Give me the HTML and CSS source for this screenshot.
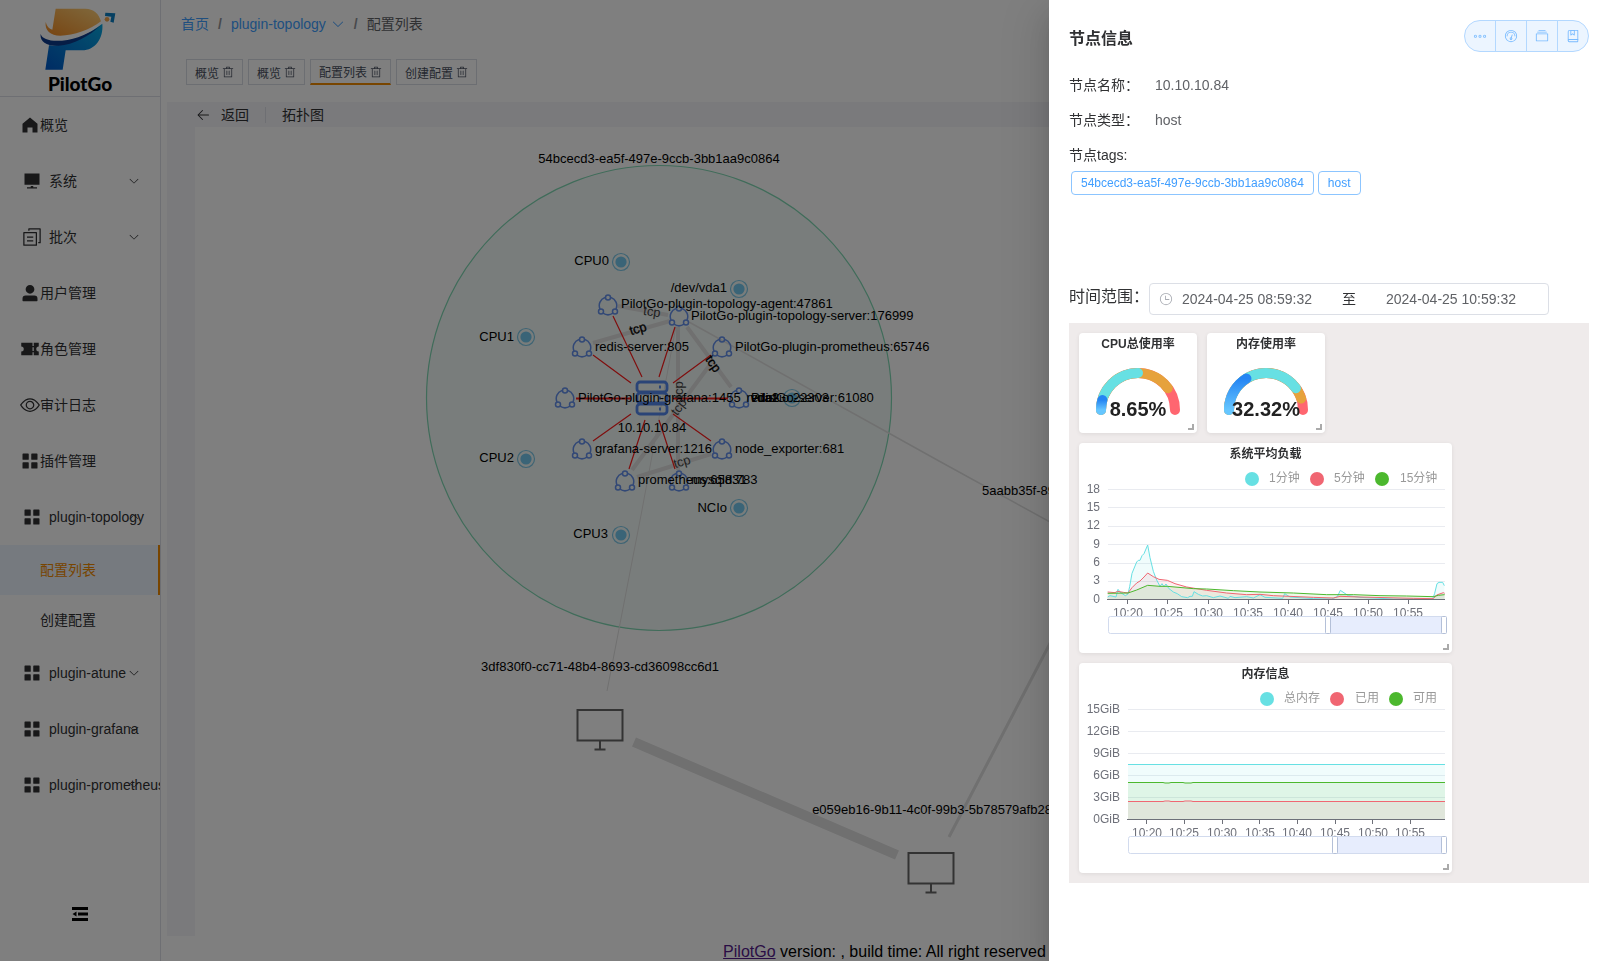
FILE: index.html
```html
<!DOCTYPE html>
<html lang="zh">
<head>
<meta charset="utf-8">
<title>PilotGo</title>
<link rel="stylesheet" href="styles.css">
</head>
<body>
<svg class="defs" aria-hidden="true">
  <symbol id="i-down" viewBox="0 0 1024 1024"><path d="M831.872 340.864 512 652.672 192.128 340.864a30.592 30.592 0 0 0-42.752 0 29.12 29.12 0 0 0 0 41.6L489.664 714.24a32 32 0 0 0 44.672 0l340.288-331.712a29.12 29.12 0 0 0 0-41.728 30.592 30.592 0 0 0-42.752 0z"/></symbol>
  <symbol id="i-home" viewBox="0 0 1024 1024"><path d="M512 128 128 447.936V896h255.936V640H640v256h255.936V447.936z"/></symbol>
  <symbol id="i-platform" viewBox="0 0 1024 1024"><path d="M448 832v-64h128v64h192v64H256v-64zM128 704V128h768v576z"/></symbol>
  <symbol id="i-copy" viewBox="0 0 1024 1024"><path d="M128 320v576h576V320zm-32-64h640a32 32 0 0 1 32 32v640a32 32 0 0 1-32 32H96a32 32 0 0 1-32-32V288a32 32 0 0 1 32-32M960 96v704a32 32 0 0 1-32 32h-96v-64h64V128H384v64h-64V96a32 32 0 0 1 32-32h576a32 32 0 0 1 32 32M256 672h320v64H256zm0-192h320v64H256z"/></symbol>
  <symbol id="i-user" viewBox="0 0 1024 1024"><path d="M288 320a224 224 0 1 0 448 0 224 224 0 1 0-448 0m544 608H160a32 32 0 0 1-32-32v-96a160 160 0 0 1 160-160h448a160 160 0 0 1 160 160v96a32 32 0 0 1-32 32z"/></symbol>
  <symbol id="i-ticket" viewBox="0 0 1024 1024"><path d="M640 832H64V640a128 128 0 1 0 0-256V192h576v160h64V192h256v192a128 128 0 1 0 0 256v192H704V672h-64zm0-416v192h64V416z"/></symbol>
  <symbol id="i-view" viewBox="0 0 1024 1024"><path d="M512 160c320 0 512 352 512 352S832 864 512 864 0 512 0 512s192-352 512-352m0 64c-225.28 0-384.128 208.064-436.8 288 52.608 79.872 211.456 288 436.8 288 225.28 0 384.128-208.064 436.8-288-52.608-79.872-211.456-288-436.8-288m0 64a224 224 0 1 1 0 448 224 224 0 0 1 0-448m0 64a160.192 160.192 0 0 0-160 160c0 88.192 71.744 160 160 160s160-71.808 160-160-71.744-160-160-160"/></symbol>
  <symbol id="i-menu" viewBox="0 0 1024 1024"><path d="M160 448a32 32 0 0 1-32-32V160.064a32 32 0 0 1 32-32h256a32 32 0 0 1 32 32V416a32 32 0 0 1-32 32zm448 0a32 32 0 0 1-32-32V160.064a32 32 0 0 1 32-32h255.936a32 32 0 0 1 32 32V416a32 32 0 0 1-32 32zM160 896a32 32 0 0 1-32-32V608a32 32 0 0 1 32-32h256a32 32 0 0 1 32 32v256a32 32 0 0 1-32 32zm448 0a32 32 0 0 1-32-32V608a32 32 0 0 1 32-32h255.936a32 32 0 0 1 32 32v256a32 32 0 0 1-32 32z"/></symbol>
  <symbol id="i-trash" viewBox="0 0 1024 1024"><path d="M160 256H96a32 32 0 0 1 0-64h256V95.936a32 32 0 0 1 32-32h256a32 32 0 0 1 32 32V192h256a32 32 0 1 1 0 64h-64v672a32 32 0 0 1-32 32H192a32 32 0 0 1-32-32zm448-64v-64H416v64zM224 896h576V256H224zm192-128a32 32 0 0 1-32-32V416a32 32 0 0 1 64 0v320a32 32 0 0 1-32 32m192 0a32 32 0 0 1-32-32V416a32 32 0 0 1 64 0v320a32 32 0 0 1-32 32"/></symbol>
  <symbol id="i-back" viewBox="0 0 1024 1024"><path d="M224 480h640a32 32 0 1 1 0 64H224a32 32 0 0 1 0-64"/><path d="m237.248 512 265.408 265.344a32 32 0 0 1-45.312 45.312l-288-288a32 32 0 0 1 0-45.312l288-288a32 32 0 1 1 45.312 45.312z"/></symbol>
  <symbol id="i-more" viewBox="0 0 1024 1024"><path d="M176 416a112 112 0 1 0 0 224 112 112 0 0 0 0-224m0 64a48 48 0 1 1 0 96 48 48 0 0 1 0-96m336-64a112 112 0 1 1 0 224 112 112 0 0 1 0-224m0 64a48 48 0 1 0 0 96 48 48 0 0 0 0-96m336-64a112 112 0 1 1 0 224 112 112 0 0 1 0-224m0 64a48 48 0 1 0 0 96 48 48 0 0 0 0-96"/></symbol>
  <symbol id="i-meter" viewBox="0 0 1024 1024"><path d="M512 896a384 384 0 1 0 0-768 384 384 0 0 0 0 768m0 64a448 448 0 1 1 0-896 448 448 0 0 1 0 896"/><path d="M192 512a320 320 0 1 1 640 0 32 32 0 1 1-64 0 256 256 0 1 0-512 0 32 32 0 0 1-64 0"/><path d="M570.432 627.84A96 96 0 1 1 509.568 608l60.992-187.776A32 32 0 1 1 631.424 440zM502.08 734.464a32 32 0 1 0 19.84-60.928 32 32 0 0 0-19.84 60.928"/></symbol>
  <symbol id="i-files" viewBox="0 0 1024 1024"><path d="M128 384v448h768V384zm-32-64h832a32 32 0 0 1 32 32v512a32 32 0 0 1-32 32H96a32 32 0 0 1-32-32V352a32 32 0 0 1 32-32m64-128h704v64H160zm96-128h512v64H256z"/></symbol>
  <symbol id="i-collection" viewBox="0 0 1024 1024"><path d="M192 736h640V128H256a64 64 0 0 0-64 64zm64-672h608a32 32 0 0 1 32 32v672a32 32 0 0 1-32 32H160l-32 57.536V192A128 128 0 0 1 256 64"/><path d="M240 800a48 48 0 1 0 0 96h592v-96zm0-64h656v160a64 64 0 0 1-64 64H240a112 112 0 0 1 0-224m144-608v250.88l96-76.8 96 76.8V128zm-64-64h320v381.44a32 32 0 0 1-51.968 24.96L480 384l-108.032 86.4A32 32 0 0 1 320 445.44z"/></symbol>
  <symbol id="i-clock" viewBox="0 0 1024 1024"><path d="M512 896a384 384 0 1 0 0-768 384 384 0 0 0 0 768m0 64a448 448 0 1 1 0-896 448 448 0 0 1 0 896"/><path d="M480 256a32 32 0 0 1 32 32v256a32 32 0 0 1-64 0V288a32 32 0 0 1 32-32"/><path d="M480 512h256q32 0 32 32t-32 32H480q-32 0-32-32t32-32"/></symbol>
  <symbol id="n-proc" viewBox="-12 -12 24 24"><path d="M-3 -7.5A8.5 8.5 0 0 0 -8 4M3 -7.5A8.5 8.5 0 0 1 8 4M-5 8.2A9 9 0 0 0 5 8.2"/><circle cx="0" cy="-7.4" r="2.5"/><circle cx="-7" cy="6.4" r="2.5"/><circle cx="7" cy="6.4" r="2.5"/></symbol>
  <symbol id="n-res" viewBox="-12 -12 24 24"><circle class="ring" r="8.5"/><circle class="dot" r="5.6"/></symbol>
  <symbol id="n-pc" viewBox="-25 -25 50 50"><path d="M-22.500 -20h45v30.500h-45zM0 10.500v9M-5.500 19.500h11"/></symbol>
</svg>

<div class="app">
  <aside class="side">
    <div class="logo">
      <svg class="mark" width="80" height="72" viewBox="29 10 240 216">
        <defs>
          <linearGradient id="lo" x1="1" y1="0" x2="0" y2="1"><stop offset="0" stop-color="#ffd27a"/><stop offset="1" stop-color="#f08a24"/></linearGradient>
          <linearGradient id="lb" x1="1" y1="0" x2="0" y2="1"><stop offset="0" stop-color="#08a8e0"/><stop offset="1" stop-color="#0058c8"/></linearGradient>
        </defs>
        <path fill="url(#lo)" d="M76 27H165C190 27 206 42 212 65C180 90 130 108 90 108C60 108 43 92 46 67C50 80 56 88 66 90Z"/>
        <path fill="url(#lb)" d="M216 72C220 115 195 152 155 152H106L97 210H45L56 137C110 142 165 108 216 72Z"/>
        <path fill="#0d3b8c" d="M31 103C35 118 60 126 95 123C140 119 180 100 213 76C175 110 130 136 85 138C45 140 28 122 31 103Z"/>
        <circle cx="230" cy="59" r="7" fill="#f5a54a"/>
        <path fill="#0b7fc2" d="M225 39L255 41L250 69L240 66L243 51L224 49Z"/>
      </svg>
      <span class="word">PilotGo</span>
    </div>
    <nav class="menu">
      <a href="#" class="item"><svg class="ic"><use href="#i-home"/></svg>概览</a>
      <a href="#" class="item sub"><svg class="ic"><use href="#i-platform"/></svg>系统<svg class="arr"><use href="#i-down"/></svg></a>
      <a href="#" class="item sub"><svg class="ic"><use href="#i-copy"/></svg>批次<svg class="arr"><use href="#i-down"/></svg></a>
      <a href="#" class="item"><svg class="ic"><use href="#i-user"/></svg>用户管理</a>
      <a href="#" class="item"><svg class="ic"><use href="#i-ticket"/></svg>角色管理</a>
      <a href="#" class="item"><svg class="ic"><use href="#i-view"/></svg>审计日志</a>
      <a href="#" class="item"><svg class="ic"><use href="#i-menu"/></svg>插件管理</a>
      <a href="#" class="item sub"><svg class="ic"><use href="#i-menu"/></svg>plugin-topology<svg class="arr up"><use href="#i-down"/></svg></a>
      <a href="#" class="leaf active">配置列表</a>
      <a href="#" class="leaf">创建配置</a>
      <a href="#" class="item sub"><svg class="ic"><use href="#i-menu"/></svg>plugin-atune<svg class="arr"><use href="#i-down"/></svg></a>
      <a href="#" class="item sub"><svg class="ic"><use href="#i-menu"/></svg>plugin-grafana<svg class="arr"><use href="#i-down"/></svg></a>
      <a href="#" class="item sub"><svg class="ic"><use href="#i-menu"/></svg>plugin-prometheus<svg class="arr"><use href="#i-down"/></svg></a>
    </nav>
    <button class="fold" aria-label="折叠菜单"><svg width="16" height="14" viewBox="0 0 16 14"><path d="M0 0h16v3H0zM6 5.500h10v3H6zM0 11h16v3H0zM4.500 4.500v5L0.500 7z"/></svg></button>
  </aside>

  <main class="main">
    <div class="crumbs"><a href="#">首页</a><b>/</b><a href="#">plugin-topology</a><svg class="arr"><use href="#i-down"/></svg><b>/</b><span>配置列表</span></div>
    <div class="tabs">
      <button class="tab">概览<svg><use href="#i-trash"/></svg></button>
      <button class="tab">概览<svg><use href="#i-trash"/></svg></button>
      <button class="tab on">配置列表<svg><use href="#i-trash"/></svg></button>
      <button class="tab">创建配置<svg><use href="#i-trash"/></svg></button>
    </div>
    <section class="content">
      <div class="pagehead"><button class="back"><svg><use href="#i-back"/></svg>返回</button><i></i><span>拓扑图</span></div>
      <div class="canvas">
        <svg class="graph">
          <g transform="translate(-195 -127)">
            <circle class="hull" cx="659" cy="398" r="232.500"/>
            <g class="edge">
              <path d="M618 306L668 315M593 343L670 321M678 327V470M687 327L731 387M712 362L632 470M637 477L711 454" stroke-width="4"/>
              <path d="M689 322L939 461L1070 533" stroke-width="1.500"/>
              <path d="M676 326L642 510L607 691" stroke-width="1"/>
              <path d="M634 742L897 855" stroke-width="10"/>
              <path d="M949 837L1070 605" stroke-width="3"/>
            </g>
            <path class="own" d="M613 316L642 377M675 327L659 377M593 355L631 383M711 355L673 383M593 441L631 414M629 469L645 420M675 469L659 420M673 414L711 441"/>
            <path class="own bold" d="M576 398.500H631M673 398.500H728"/>
            <g class="host"><rect x="637" y="382" width="30" height="10" rx="3"/><rect x="637" y="393" width="30" height="10" rx="3"/><rect x="637" y="404" width="30" height="10" rx="3"/><path d="M659 387h2M659 398h2M659 409h2"/></g>
            <g class="proc">
              <use href="#n-proc" x="596" y="293" width="24" height="24"/>
              <use href="#n-proc" x="667" y="304" width="24" height="24"/>
              <use href="#n-proc" x="570" y="335" width="24" height="24"/>
              <use href="#n-proc" x="710" y="335" width="24" height="24"/>
              <use href="#n-proc" x="553" y="386" width="24" height="24"/>
              <use href="#n-proc" x="727" y="386" width="24" height="24"/>
              <use href="#n-proc" x="570" y="437" width="24" height="24"/>
              <use href="#n-proc" x="710" y="437" width="24" height="24"/>
              <use href="#n-proc" x="613" y="469" width="24" height="24"/>
              <use href="#n-proc" x="667" y="469" width="24" height="24"/>
            </g>
            <g class="res">
              <use href="#n-res" x="609" y="250" width="24" height="24"/>
              <use href="#n-res" x="727" y="277" width="24" height="24"/>
              <use href="#n-res" x="514" y="325" width="24" height="24"/>
              <use href="#n-res" x="514" y="447" width="24" height="24"/>
              <use href="#n-res" x="609" y="523" width="24" height="24"/>
              <use href="#n-res" x="727" y="496" width="24" height="24"/>
              <use href="#n-res" x="780" y="386" width="24" height="24"/>
            </g>
            <g class="pc"><use href="#n-pc" x="575" y="705" width="50" height="50"/><use href="#n-pc" x="906" y="848" width="50" height="50"/></g>
            <g class="lbl">
              <text x="621" y="308">PilotGo-plugin-topology-agent:47861</text>
              <text x="691" y="320">PilotGo-plugin-topology-server:176999</text>
              <text x="595" y="351">redis-server:805</text>
              <text x="735" y="351">PilotGo-plugin-prometheus:65746</text>
              <text x="578" y="402">PilotGo-plugin-grafana:1455</text>
              <text x="751" y="402">PilotGo-server:61080</text>
              <text x="595" y="453">grafana-server:1216</text>
              <text x="735" y="453">node_exporter:681</text>
              <text x="638" y="484">prometheus:65831</text>
              <text x="691" y="484">mysqld:783</text>
              <text x="779" y="402" text-anchor="end">vda2</text>
              <text x="779" y="402" text-anchor="end">vda1</text>
              <text x="829" y="402" text-anchor="end">redis-io:22303</text>
              <text x="652" y="432" text-anchor="middle">10.10.10.84</text>
              <text x="609" y="265" text-anchor="end">CPU0</text>
              <text x="727" y="292" text-anchor="end">/dev/vda1</text>
              <text x="514" y="341" text-anchor="end">CPU1</text>
              <text x="514" y="462" text-anchor="end">CPU2</text>
              <text x="608" y="538" text-anchor="end">CPU3</text>
              <text x="727" y="512" text-anchor="end">NCIo</text>
              <text x="659" y="163" text-anchor="middle">54bcecd3-ea5f-497e-9ccb-3bb1aa9c0864</text>
              <text x="600" y="671" text-anchor="middle">3df830f0-cc71-48b4-8693-cd36098cc6d1</text>
              <text x="932" y="814" text-anchor="middle">e059eb16-9b11-4c0f-99b3-5b78579afb28</text>
              <text x="982" y="495">5aabb35f-89a3-4d21</text>
              <g text-anchor="middle">
                <text class="soft" transform="translate(652 312) rotate(8)" y="4">tcp</text>
                <text class="strong" transform="translate(638 329) rotate(-17)" y="4">tcp</text>
                <text class="strong" transform="translate(713 364) rotate(54)" y="4">tcp</text>
                <text class="soft" transform="translate(679 390) rotate(-90)" y="4">tcp</text>
                <text class="soft" transform="translate(679 407) rotate(-53)" y="4">tcp</text>
                <text class="soft" transform="translate(682 462) rotate(-17)" y="4">tcp</text>
              </g>
            </g>
          </g>
        </svg>
      </div>
    </section>
    <footer class="foot"><a href="#">PilotGo</a> version: , build time: All right reserved</footer>
  </main>
</div>

<div class="mask"></div>

<section class="drawer" role="dialog" aria-labelledby="dt">
  <header class="dhead">
    <h1 id="dt">节点信息</h1>
    <div class="group">
      <button aria-label="更多"><svg><use href="#i-more"/></svg></button>
      <button aria-label="指标"><svg><use href="#i-meter"/></svg></button>
      <button aria-label="文件"><svg><use href="#i-files"/></svg></button>
      <button aria-label="收藏"><svg><use href="#i-collection"/></svg></button>
    </div>
  </header>
  <dl class="info">
    <div><dt>节点名称：</dt><dd>10.10.10.84</dd></div>
    <div><dt>节点类型：</dt><dd>host</dd></div>
    <div><dt>节点tags:</dt></div>
  </dl>
  <div class="tags"><span>54bcecd3-ea5f-497e-9ccb-3bb1aa9c0864</span><span>host</span></div>

  <div class="range">
    <label for="from">时间范围：</label>
    <div class="picker"><svg><use href="#i-clock"/></svg><input id="from" value="2024-04-25 08:59:32"><span>至</span><input aria-label="结束时间" value="2024-04-25 10:59:32"></div>
  </div>

  <div class="board">
    <article class="card small">
      <h2>CPU总使用率</h2>
      <svg width="118" height="100" viewBox="0 0 118 100" class="gauge">
        <defs><linearGradient id="gb" x1="0" y1="0" x2="0" y2="1"><stop offset="0" stop-color="#2585f3"/><stop offset="1" stop-color="#66c6ff"/></linearGradient></defs>
        <path d="M22 77A37 37 0 0 1 96 77" stroke="#ff6670"/>
        <path d="M22 77A37 37 0 0 1 88.930 55.250" stroke="#e6a23c"/>
        <path d="M22 77A37 37 0 0 1 59 40" stroke="#67e0e3"/>
        <path d="M22 77A37 37 0 0 1 23.350 67.060" stroke="url(#gb)"/>
        <text x="59" y="83">8.65%</text>
      </svg><i class="grip"></i>
    </article>
    <article class="card small">
      <h2>内存使用率</h2>
      <svg width="118" height="100" viewBox="0 0 118 100" class="gauge">
        <path d="M22 77A37 37 0 0 1 96 77" stroke="#ff6670"/>
        <path d="M22 77A37 37 0 0 1 94.190 65.570" stroke="#e6a23c"/>
        <path d="M22 77A37 37 0 0 1 88.930 55.250" stroke="#67e0e3"/>
        <path d="M22 77A37 37 0 0 1 39.480 45.550" stroke="url(#gb)"/>
        <text x="59" y="83">32.32%</text>
      </svg><i class="grip"></i>
    </article>
    <article class="card wide">
      <h2>系统平均负载</h2>
      <svg width="373" height="210" viewBox="0 0 373 210" class="chart">
        <g class="legend"><circle cx="173" cy="36" r="7" fill="#67e0e3"/><circle cx="238" cy="36" r="7" fill="#f06672"/><circle cx="303" cy="36" r="7" fill="#4cb82e"/><text x="190" y="39">1分钟</text><text x="255" y="39">5分钟</text><text x="321" y="39">15分钟</text></g>
        <path class="grid" d="M29 46.500H366M29 64.500H366M29 83.500H366M29 101.500H366M29 120.500H366M29 138.500H366"/>
        <g class="ax" text-anchor="end"><text x="21" y="50">18</text><text x="21" y="68">15</text><text x="21" y="86">12</text><text x="21" y="105">9</text><text x="21" y="123">6</text><text x="21" y="141">3</text><text x="21" y="160">0</text></g>
        <svg x="0" y="0" width="373" height="210" viewBox="57 39 1119 630" class="series">
          <path class="a" fill="#67e0e3" d="M143 508L143 501 150 497 168 501 174 478 182 488 196 497 204 492 209 470 216 430 230 396 235 391 240 391 246 377 252 371 263 345 270 383 280 424 290 450 300 469 306 461 312 470 318 462 326 475 340 486 352 491 365 500 383 503 390 499 397 499 402 485 415 493 428 498 440 497 460 503 480 498 505 505 510 499 525 503 560 500 580 504 600 494 615 502 668 505 674 491 690 501 760 506 815 507 832 500 841 481 865 497 900 502 1000 507 1118 507 1124 490 1131 461 1137 457 1148 457 1153 467V508Z"/>
          <path class="a" fill="#f06672" d="M143 508L143 486 165 488 172 484 190 487 204 489 216 473 230 459 240 453 252 441 263 429 280 440 297 448 322 451 345 461 380 471 440 481 500 489 560 494 600 493 640 497 760 502 820 504 840 499 900 501 1060 505 1120 506 1130 495 1150 488 1154 490V508Z"/>
          <path class="a" fill="#4cb82e" d="M143 508L143 490 204 489 230 480 263 466 300 469 322 469 400 476 440 477 520 482 600 486 700 489 800 494 880 494 960 497 1040 498 1120 500 1135 496 1154 494V508Z"/>
          <path stroke="#67e0e3" d="M143 501L150 497 168 501 174 478 182 488 196 497 204 492 209 470 216 430 230 396 235 391 240 391 246 377 252 371 263 345 270 383 280 424 290 450 300 469 306 461 312 470 318 462 326 475 340 486 352 491 365 500 383 503 390 499 397 499 402 485 415 493 428 498 440 497 460 503 480 498 505 505 510 499 525 503 560 500 580 504 600 494 615 502 668 505 674 491 690 501 760 506 815 507 832 500 841 481 865 497 900 502 1000 507 1118 507 1124 490 1131 461 1137 457 1148 457 1153 467"/>
          <path stroke="#f06672" d="M143 486L165 488 172 484 190 487 204 489 216 473 230 459 240 453 252 441 263 429 280 440 297 448 322 451 345 461 380 471 440 481 500 489 560 494 600 493 640 497 760 502 820 504 840 499 900 501 1060 505 1120 506 1130 495 1150 488 1154 490"/>
          <path stroke="#4cb82e" d="M143 490L204 489 230 480 263 466 300 469 322 469 400 476 440 477 520 482 600 486 700 489 800 494 880 494 960 497 1040 498 1120 500 1135 496 1154 494"/>
        </svg>
        <path class="axis" d="M28 156.500H366M48.500 156v5M88.500 156v5M129.500 156v5M169.500 156v5M209.500 156v5M249.500 156v5M289.500 156v5M329.500 156v5"/>
        <g class="ax" text-anchor="middle"><text x="49" y="174">10:20</text><text x="89" y="174">10:25</text><text x="129" y="174">10:30</text><text x="169" y="174">10:35</text><text x="209" y="174">10:40</text><text x="249" y="174">10:45</text><text x="289" y="174">10:50</text><text x="329" y="174">10:55</text></g>
        <rect class="track" x="29.500" y="173.500" width="337" height="17" rx="2"/><rect class="sel" x="250" y="174" width="115" height="16"/>
        <rect class="knob" x="246.500" y="173.500" width="5" height="17" rx="1"/><rect class="knob" x="362.500" y="173.500" width="5" height="17" rx="1"/>
      </svg><i class="grip"></i>
    </article>
    <article class="card wide">
      <h2>内存信息</h2>
      <svg width="373" height="210" viewBox="0 0 373 210" class="chart">
        <g class="legend"><circle cx="188" cy="36" r="7" fill="#67e0e3"/><circle cx="258" cy="36" r="7" fill="#f06672"/><circle cx="317" cy="36" r="7" fill="#4cb82e"/><text x="205" y="39">总内存</text><text x="276" y="39">已用</text><text x="334" y="39">可用</text></g>
        <path class="grid" d="M49 46.500H366M49 68.500H366M49 90.500H366M49 112.500H366M49 134.500H366"/>
        <g class="ax" text-anchor="end"><text x="41" y="50">15GiB</text><text x="41" y="72">12GiB</text><text x="41" y="94">9GiB</text><text x="41" y="116">6GiB</text><text x="41" y="138">3GiB</text><text x="41" y="160">0GiB</text></g>
        <g class="series">
          <path class="a" fill="#67e0e3" d="M49 101.500H366V156H49Z"/><path class="a" fill="#4cb82e" d="M49 119.500H366V156H49Z"/><path class="a" fill="#f06672" d="M49 138.500H366V156H49Z"/>
          <path stroke="#67e0e3" d="M49 101.500H366"/><path stroke="#f06672" d="M49 138.500H84L86 138H90L92 138.500H104L106 138H112L114 138.500H366"/><path stroke="#4cb82e" d="M49 119.500H84L86 120H90L92 119.500H104L106 120H112L114 119.500H366"/>
        </g>
        <path class="axis" d="M48 156.500H366M67.500 156v5M105.500 156v5M143.500 156v5M180.500 156v5M218.500 156v5M256.500 156v5M293.500 156v5M331.500 156v5"/>
        <g class="ax" text-anchor="middle"><text x="68" y="174">10:20</text><text x="105" y="174">10:25</text><text x="143" y="174">10:30</text><text x="181" y="174">10:35</text><text x="218" y="174">10:40</text><text x="256" y="174">10:45</text><text x="294" y="174">10:50</text><text x="331" y="174">10:55</text></g>
        <rect class="track" x="49.500" y="173.500" width="317" height="17" rx="2"/><rect class="sel" x="257" y="174" width="108" height="16"/>
        <rect class="knob" x="253.500" y="173.500" width="5" height="17" rx="1"/><rect class="knob" x="362.500" y="173.500" width="5" height="17" rx="1"/>
      </svg><i class="grip"></i>
    </article>
  </div>
</section>
</body>
</html>
```

FILE: styles.css
```css
* { box-sizing: border-box; }
body { margin: 0; font-family: "Liberation Sans", "Noto Sans CJK SC", sans-serif; font-size: 14px; color: #303133; background: #fff; }
button { font: inherit; color: inherit; background: none; border: 0; padding: 0; }
a { color: inherit; text-decoration: none; }
svg { fill: currentColor; flex: none; }
.defs { position: absolute; width: 0; height: 0; }

.app { display: flex; height: 100vh; overflow: hidden; }

.side { flex: none; width: 161px; display: flex; flex-direction: column; border-right: 1px solid #dcdfe6; overflow: hidden; }
.logo { height: 97px; border-bottom: 1px solid #dcdfe6; display: flex; flex-direction: column; align-items: center; padding-top: 3px; }
.mark { display: block; }
.word { font-family: Lato, sans-serif; font-weight: 900; font-size: 19px; line-height: 18px; color: #000; }
.menu { display: flex; flex-direction: column; }
.item { height: 56px; line-height: 56px; display: flex; align-items: center; padding-left: 20px; white-space: nowrap; position: relative; }
.item .ic { width: 20px; height: 20px; }
.item.sub .ic { margin: 0 7px 0 2px; }
.arr { width: 12px; height: 12px; }
.item .arr { position: absolute; right: 20px; top: 22px; }
.item .arr.up { transform: rotate(180deg); }
.leaf { height: 50px; line-height: 50px; padding-left: 40px; }
.leaf.active { background: #ecf5ff; color: #f08a00; border-right: 2px solid #f08a00; }
.fold { margin: auto 0 40px; align-self: center; display: flex; color: #000; }

.main { flex: 1; min-width: 0; display: flex; flex-direction: column; }
.crumbs { height: 48px; line-height: 48px; padding-left: 20px; display: flex; align-items: center; color: #606266; }
.crumbs a { color: #409eff; }
.crumbs b { margin: 0 9px; color: #909399; }
.crumbs .arr { width: 14px; height: 14px; margin-left: 5px; color: #409eff; }
.tabs { display: flex; gap: 5px; padding: 11px 0 0 25px; }
.tab { height: 26px; padding: 0 8px; border: 1px solid #d8dce5; font-size: 12px; color: #495060; display: flex; align-items: center; gap: 3px; }
.tab svg { width: 12px; height: 12px; }
.tab.on { border-bottom: 2px solid #f08a00; }
.content { flex: 1; min-height: 0; margin: 17px 6px 0; padding: 0 28px; background: #f4f4f9; display: flex; flex-direction: column; }
.pagehead { height: 25px; line-height: 24px; display: flex; align-items: center; }
.back { display: flex; align-items: center; gap: 10px; line-height: 24px; }
.back svg { width: 16px; height: 16px; }
.pagehead i { width: 1px; height: 16px; background: #dcdfe6; margin: 0 16px; }
.canvas { flex: 1; min-height: 0; background: #fff; overflow: hidden; }
.graph { display: block; width: 100%; height: 100%; }
.foot { height: 25px; line-height: 32px; font-size: 16px; text-align: center; color: #000; }
.foot a { color: #551a8b; text-decoration: underline; }

.hull { fill: #f3fbf8; stroke: #80d8b4; stroke-width: 1.200; }
.edge { fill: none; stroke: #e0e0e0; }
.own { fill: none; stroke: #ff1c1c; stroke-width: 1.200; }
.own.bold { stroke-width: 2; }
.host { fill: none; stroke: #5488ee; stroke-width: 2.800; }
.proc { fill: none; stroke: #6490ec; stroke-width: 1.500; }
.ring { fill: none; stroke: #7cc8e8; stroke-width: 1.200; }
.dot { fill: #74c8ee; }
.pc { fill: none; stroke: #666; stroke-width: 2; }
.lbl { font-size: 13px; fill: #000; }
.soft { fill: #444; }
.strong { stroke: #000; stroke-width: 0.300; }

.mask { position: fixed; inset: 0; background: rgba(0, 0, 0, 0.5); }

.drawer { position: fixed; top: 0; right: 0; bottom: 0; width: 559px; background: #fff; padding: 20px 19px 20px 20px; box-shadow: 0 16px 48px 16px rgba(0, 0, 0, 0.08), 0 12px 32px rgba(0, 0, 0, 0.12), 0 8px 16px -8px rgba(0, 0, 0, 0.16); overflow: hidden; }
.dhead { display: flex; justify-content: space-between; align-items: center; height: 32px; }
.dhead h1 { margin: 6px 0 0; font-size: 16px; line-height: 24px; }
.group { display: flex; }
.group button { width: 32px; height: 32px; border: 1px solid #b3d8ff; background: #ecf5ff; color: #79bbff; display: flex; align-items: center; justify-content: center; }
.group button + button { margin-left: -1px; }
.group button:first-child { border-radius: 16px 0 0 16px; }
.group button:last-child { border-radius: 0 16px 16px 0; }
.group svg { width: 14px; height: 14px; }
.info { margin: 16px 0 0; }
.info div { height: 35px; line-height: 35px; display: flex; gap: 16px; }
.info dd { margin: 0; color: #606266; }
.tags { display: flex; gap: 4px; padding-left: 2px; margin-top: -2px; }
.tags span { height: 24px; line-height: 22px; font-size: 12px; padding: 0 9px; border: 1px solid #8cc5ff; border-radius: 4px; color: #409eff; }
.range { display: flex; align-items: flex-start; margin-top: 88px; }
.range label { width: 80px; font-size: 16px; line-height: 28px; white-space: nowrap; }
.picker { width: 400px; height: 32px; border: 1px solid #dcdfe6; border-radius: 4px; display: flex; align-items: center; padding: 0 9px; }
.picker svg { width: 14px; height: 14px; color: #a8abb2; }
.picker input { width: 148px; border: 0; padding: 0; font: inherit; color: #606266; text-align: center; background: none; outline: 0; }
.picker span { width: 56px; line-height: 30px; text-align: center; }

.board { margin-top: 8px; background: #efebeb; padding: 10px; display: grid; grid-template-columns: 118px 118px 117px; gap: 10px; }
.card { position: relative; background: #fff; border-radius: 4px; box-shadow: 0 1px 4px rgba(0, 0, 0, 0.08); }
.card.wide { grid-column: 1 / 4; height: 210px; }
.card.small { height: 100px; }
.card h2 { margin: 0; font-size: 12px; line-height: 22px; text-align: center; height: 0; }
.card svg { display: block; }
.grip { position: absolute; right: 3px; bottom: 3px; width: 6px; height: 6px; border-right: 2px solid #aaa; border-bottom: 2px solid #aaa; }
.gauge path { fill: none; stroke-width: 10; stroke-linecap: round; }
.gauge text { font-size: 20px; font-weight: 700; text-anchor: middle; fill: #222; }
.chart text { font-size: 12px; }
.legend text { fill: #999; }
.ax text { fill: #6e7079; }
.grid { stroke: #e9ebf0; fill: none; }
.axis { stroke: #6e7079; fill: none; }
.series path { fill: none; vector-effect: non-scaling-stroke; }
.series .a { opacity: 0.1; fill: revert-layer; }
.track { fill: #fff; stroke: #d2dbee; }
.sel { fill: #e7edfd; }
.knob { fill: #fff; stroke: #b4c0d8; }
```
